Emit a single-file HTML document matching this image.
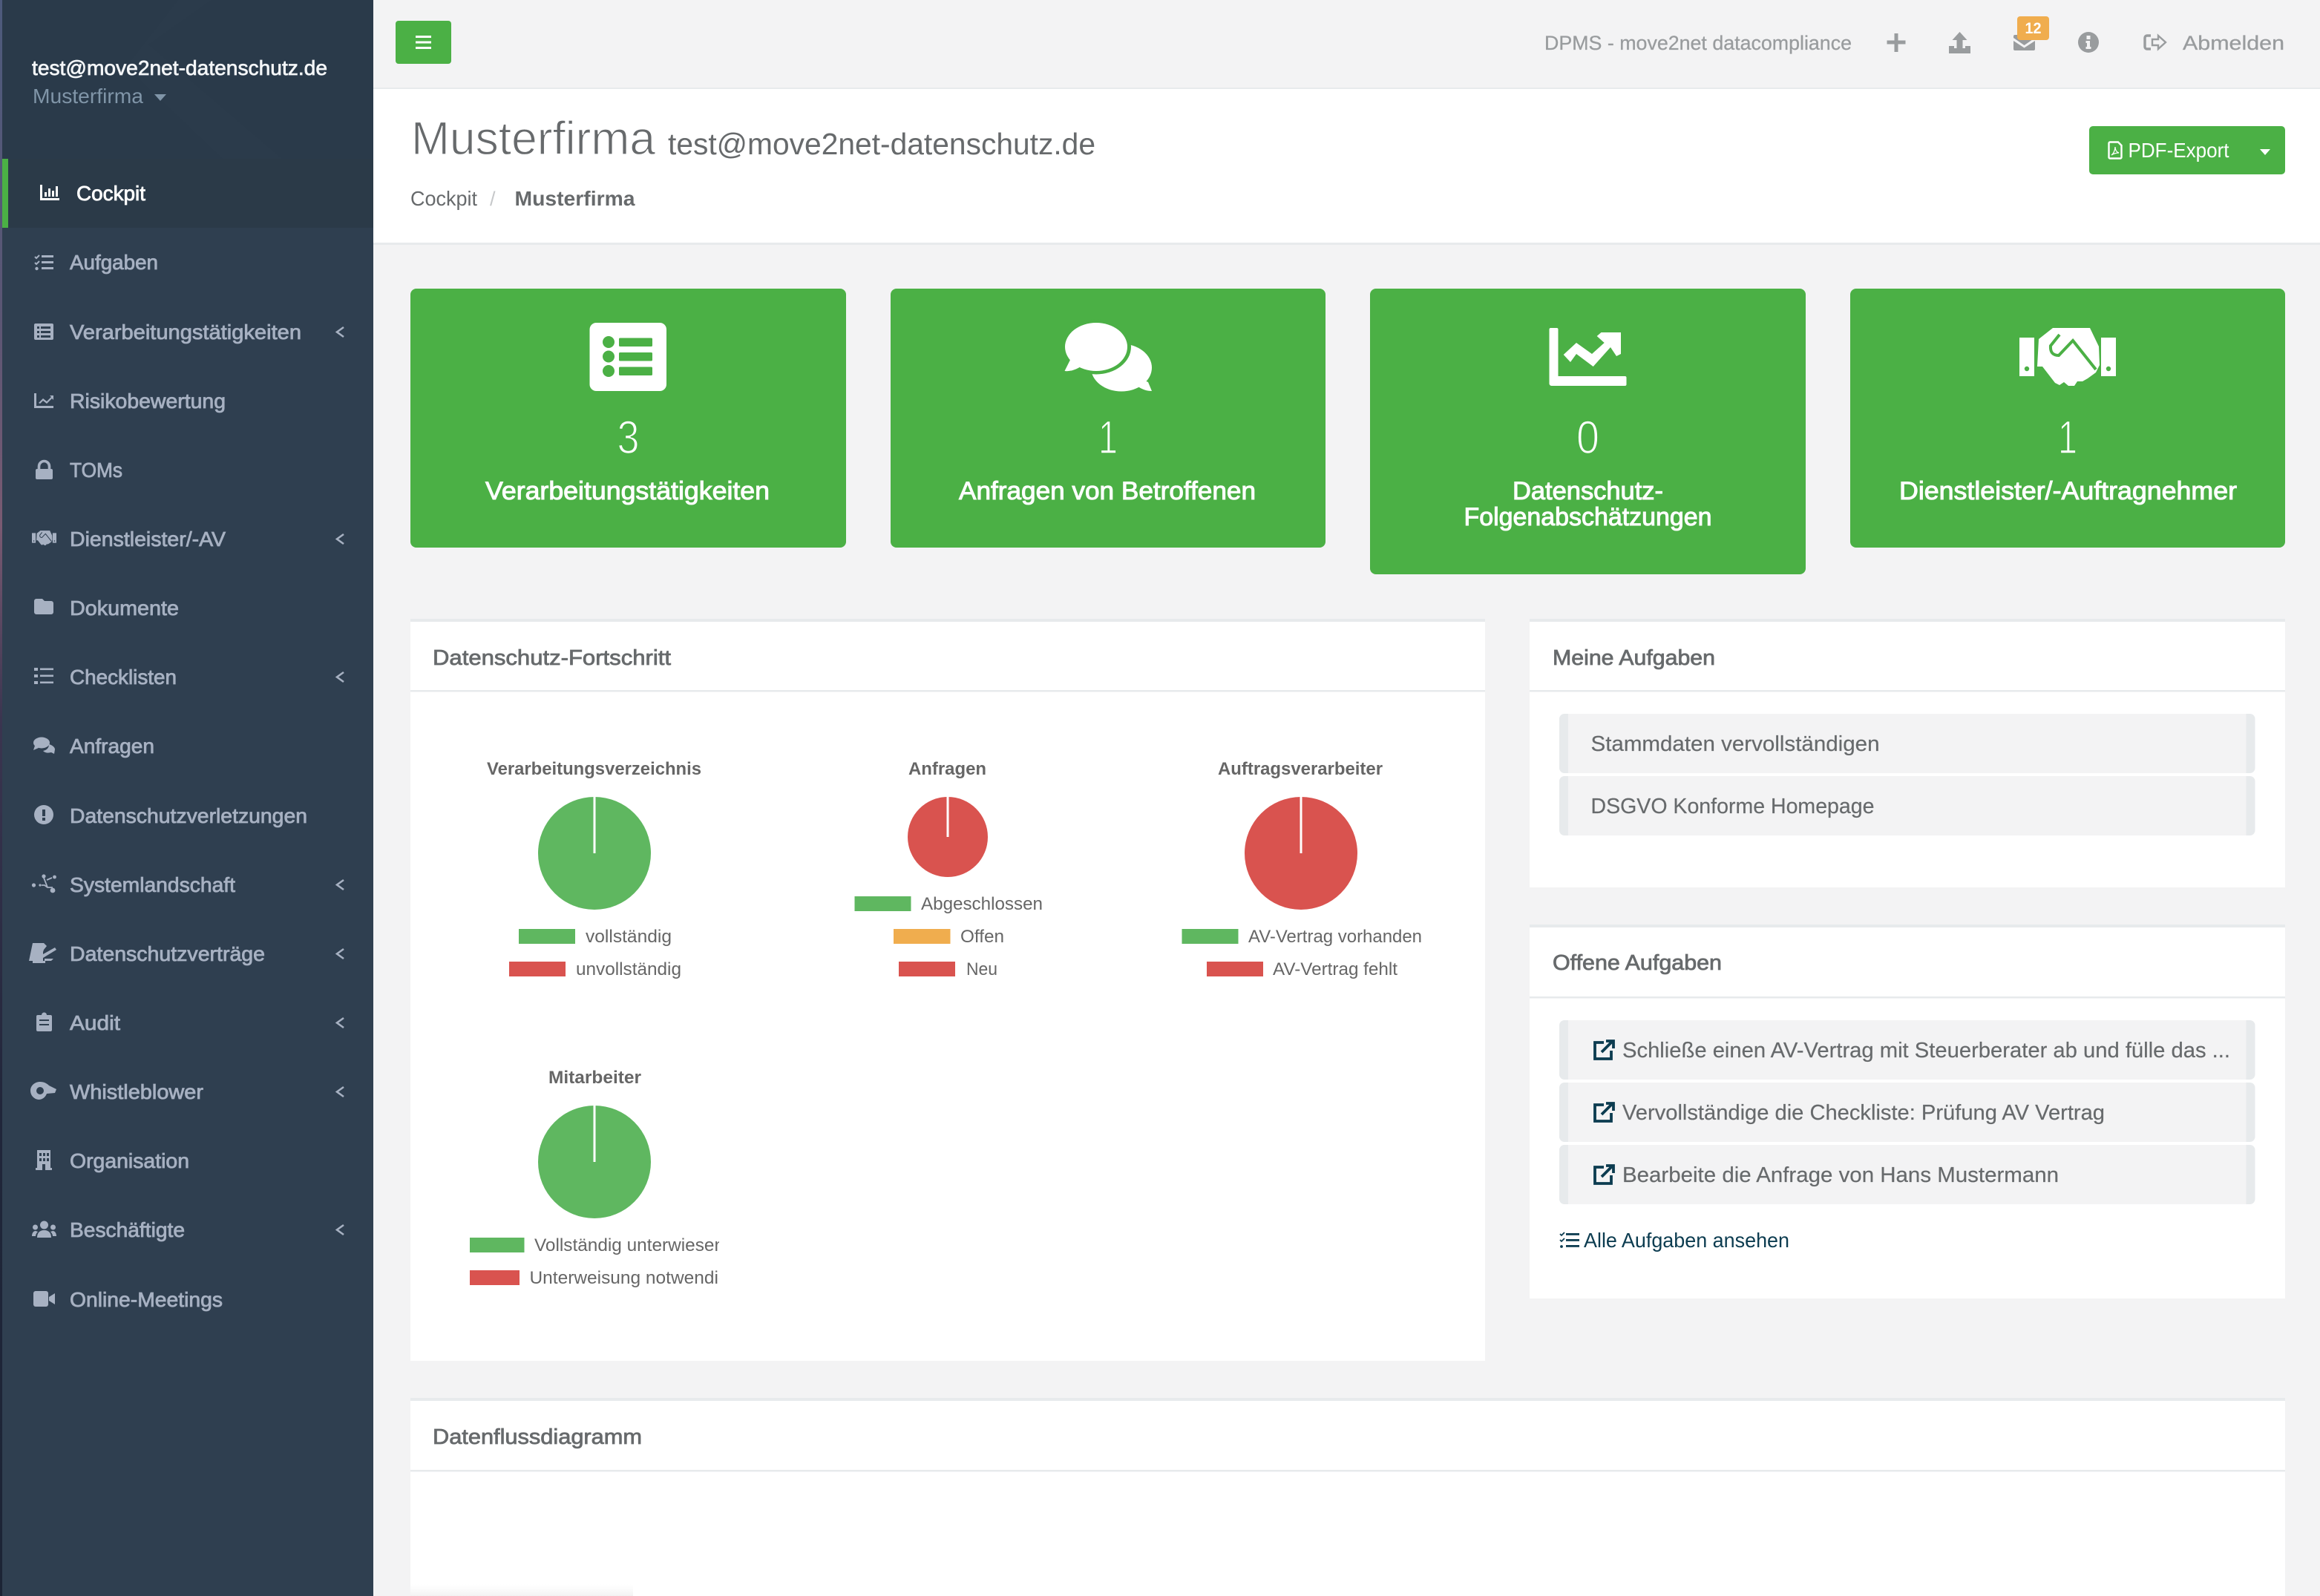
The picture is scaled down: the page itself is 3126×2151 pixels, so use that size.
<!DOCTYPE html>
<html lang="de"><head><meta charset="utf-8"><title>Cockpit</title>
<style>
html,body{margin:0;padding:0;background:#f3f3f4;width:3126px;height:2151px;overflow:hidden}
svg{display:block}
text{font-family:"Liberation Sans",sans-serif}
.m{font-size:28px;fill:#a7b1c2;stroke:#a7b1c2;stroke-width:.8px}
.h{font-size:29px;fill:#676a6c;stroke:#676a6c;stroke-width:.8px}
.t{font-size:29px;fill:#676a6c;stroke:#676a6c;stroke-width:.2px}
.nav{font-size:27px;fill:#999c9e;stroke:#999c9e;stroke-width:.3px}
.c{font-size:34px;fill:#fff;stroke:#fff;stroke-width:1px;text-anchor:middle}
.n{font-size:63px;fill:#fff;stroke:#4bb045;stroke-width:1.6px;text-anchor:middle}
.ct{font-size:24px;font-weight:bold;fill:#666}
.l{font-size:24px;fill:#666}
.ib{fill:#a7b1c2}
.chev{fill:none;stroke:#a7b1c2;stroke-width:2.6}
</style></head><body>
<svg xmlns="http://www.w3.org/2000/svg" width="3126" height="2151" viewBox="0 0 3126 2151">
<defs>
<linearGradient id="edge" x1="0" y1="0" x2="0" y2="1">
<stop offset="0" stop-color="#4d5a7c"/><stop offset=".2" stop-color="#5b5674"/><stop offset=".33" stop-color="#7a5a72"/><stop offset=".45" stop-color="#3b3550"/><stop offset=".7" stop-color="#20263a"/><stop offset="1" stop-color="#1c2435"/>
</linearGradient>
<linearGradient id="fade" x1="0" y1="0" x2="0" y2="1"><stop offset="0" stop-color="#f8f8f8" stop-opacity="0"/><stop offset="1" stop-color="#f2f2f2"/></linearGradient>
<clipPath id="cl"><rect x="560" y="1650" width="409" height="100"/></clipPath>
<symbol id="hs" viewBox="0 0 130 78" overflow="visible">
<path fill="currentColor" d="M0 13H20V65H0zM110 13H130V65H110z"/>
<circle cx="10" cy="55" r="3.2" fill="var(--c)"/><circle cx="120" cy="55" r="3.2" fill="var(--c)"/>
<path fill="currentColor" d="M45 0H95L107 25 108 50 103 60 92 68 85 72 78 72 74 78H66L60 73 54 77 48 74 31 52 24 52 26 15Z"/>
<path fill="none" stroke="var(--c)" stroke-width="4" d="M54 9 42 24Q41 37 53 37L72 17 103 56"/>
</symbol>
<g id="ext" fill="none" stroke="#0c3c50" stroke-width="3.8"><path d="M14 4H2V26H24V15"/><path d="M11 17 26 2M17 2H27V12"/></g>
</defs>

<rect width="3126" height="2151" fill="#f3f3f4"/>
<rect x="0" y="0" width="4" height="2151" fill="url(#edge)"/>

<!-- Sidebar -->
<rect x="3" y="0" width="500" height="2151" fill="#2f3f50"/>
<rect x="3" y="0" width="500" height="214" fill="#2a3a4a"/>
<path d="M240 0 285 0 200 60 380 214 300 214 170 90Z" fill="#2b3b4b" />
<rect x="3" y="214" width="500" height="93" fill="#2b3a48"/>
<rect x="3" y="214" width="8" height="93" fill="#4bb045"/>
<text x="43" y="101" font-size="28" fill="#f4f6f8" stroke="#f4f6f8" stroke-width=".7" textLength="398" lengthAdjust="spacingAndGlyphs">test@move2net-datenschutz.de</text>
<text x="44" y="139" font-size="28" fill="#8095a8" textLength="149" lengthAdjust="spacingAndGlyphs">Musterfirma</text>
<path d="M208 127H224L216 136Z" fill="#8095a8"/>

<text x="103" y="270" font-size="28" fill="#fff" stroke="#fff" stroke-width=".8" textLength="93" lengthAdjust="spacingAndGlyphs">Cockpit</text>
<text class="m" x="94" y="363" textLength="119" lengthAdjust="spacingAndGlyphs">Aufgaben</text>
<text class="m" x="94" y="457" textLength="312" lengthAdjust="spacingAndGlyphs">Verarbeitungstätigkeiten</text>
<text class="m" x="94" y="550" textLength="210" lengthAdjust="spacingAndGlyphs">Risikobewertung</text>
<text class="m" x="94" y="643" textLength="71" lengthAdjust="spacingAndGlyphs">TOMs</text>
<text class="m" x="94" y="736" textLength="210" lengthAdjust="spacingAndGlyphs">Dienstleister/-AV</text>
<text class="m" x="94" y="829" textLength="147" lengthAdjust="spacingAndGlyphs">Dokumente</text>
<text class="m" x="94" y="922" textLength="144" lengthAdjust="spacingAndGlyphs">Checklisten</text>
<text class="m" x="94" y="1015" textLength="114" lengthAdjust="spacingAndGlyphs">Anfragen</text>
<text class="m" x="94" y="1109" textLength="320" lengthAdjust="spacingAndGlyphs">Datenschutzverletzungen</text>
<text class="m" x="94" y="1202" textLength="223" lengthAdjust="spacingAndGlyphs">Systemlandschaft</text>
<text class="m" x="94" y="1295" textLength="263" lengthAdjust="spacingAndGlyphs">Datenschutzverträge</text>
<text class="m" x="94" y="1388" textLength="68" lengthAdjust="spacingAndGlyphs">Audit</text>
<text class="m" x="94" y="1481" textLength="180" lengthAdjust="spacingAndGlyphs">Whistleblower</text>
<text class="m" x="94" y="1574" textLength="161" lengthAdjust="spacingAndGlyphs">Organisation</text>
<text class="m" x="94" y="1667" textLength="155" lengthAdjust="spacingAndGlyphs">Beschäftigte</text>
<text class="m" x="94" y="1761" textLength="206" lengthAdjust="spacingAndGlyphs">Online-Meetings</text>

<!-- Chevrons -->
<g class="chev">
<path d="M463 441 454 447.5 463 454"/><path d="M463 720 454 726.5 463 733"/><path d="M463 906 454 912.500 463 919"/><path d="M463 1186 454 1192.500 463 1199"/><path d="M463 1279 454 1285.500 463 1292"/><path d="M463 1372 454 1378.500 463 1385"/><path d="M463 1465 454 1471.500 463 1478"/><path d="M463 1651 454 1657.500 463 1664"/>
</g>

<!-- Sidebar icons -->
<g fill="#fff"><path d="M54 249h3v18h23v3H54z"/><rect x="60" y="259" width="3" height="6"/><rect x="65" y="254" width="3" height="11"/><rect x="70" y="257" width="3" height="8"/><rect x="75" y="251" width="3" height="14"/></g>
<g class="ib">
<path d="M47 346l2 2 4-4M47 354l2 2 4-4" fill="none" stroke="#a7b1c2" stroke-width="2"/><circle cx="49.5" cy="362" r="2.2"/><rect x="56" y="344" width="16" height="3"/><rect x="56" y="352" width="16" height="3"/><rect x="56" y="360" width="16" height="3"/>
<path fill-rule="evenodd" d="M48 436h22a2 2 0 0 1 2 2v18a2 2 0 0 1-2 2H48a2 2 0 0 1-2-2v-18a2 2 0 0 1 2-2zM50 440v3h3v-3zM50 446v3h3v-3zM50 452v3h3v-3zM55 440v3h13v-3zM55 446v3h13v-3zM55 452v3h13v-3z"/>
<path d="M46 530h3v17h23v3H46z"/><path d="M52 543l6-6 5 4 6-6-2-2h5v6l-2-2-7 7-5-4-4 4z"/>
<rect x="48" y="632" width="23" height="14" rx="2"/><path d="M52.5 633v-4.5a7 7 0 0 1 14 0v4.5" fill="none" stroke="#a7b1c2" stroke-width="3.6"/>
<use href="#hs" x="43" y="715" width="33" height="20" style="color:#a7b1c2;--c:#2f3f50"/>
<path d="M46 810a3 3 0 0 1 3-3h8l3 3h9a3 3 0 0 1 3 3v12a3 3 0 0 1-3 3H49a3 3 0 0 1-3-3z"/>
<rect x="46" y="900" width="5" height="4"/><rect x="46" y="909" width="5" height="4"/><rect x="46" y="918" width="5" height="4"/><rect x="54" y="900.5" width="18" height="2.6"/><rect x="54" y="909.5" width="18" height="2.6"/><rect x="54" y="918.5" width="18" height="2.6"/>
<ellipse cx="56" cy="1001" rx="11" ry="7.5"/><path d="M47 1005 45 1011 52 1008Z"/><path d="M66 1003c4 1 8 4 8 7l-1 6-4-2c-4 1-8 1-11-2 5-1 8-4 8-9z"/>
<path fill-rule="evenodd" d="M59 1085a13 13 0 1 1 0 26 13 13 0 0 1 0-26zM57 1091v9h4v-9zM57 1102v4h4v-4z"/>
<circle cx="45.5" cy="1193" r="2.6"/><circle cx="54" cy="1193" r="1.6"/><circle cx="59" cy="1181" r="2.6"/><circle cx="73.5" cy="1182" r="2.4"/><circle cx="71" cy="1200" r="3.4"/>
<path d="M59 1183l5 13h7M64 1196l-4-3h-4M70 1183l-7 3" fill="none" stroke="#a7b1c2" stroke-width="1.8"/>
<path d="M44 1271h15l4 4-4 5-3 9-12 8v1h17v-3l-4 0h-18z"/><path d="M44 1271h14v26H44z"/><path d="M58 1291l18-11-2-3-16 9z"/><path d="M60 1292h12l-3 3H60z"/>
<path fill-rule="evenodd" d="M51 1368h5a3.500 3.500 0 0 1 7 0h5a2 2 0 0 1 2 2v18a2 2 0 0 1-2 2H51a2 2 0 0 1-2-2v-18a2 2 0 0 1 2-2zM53 1374v2h13v-2zM53 1380v2h13v-2z"/>
<path fill-rule="evenodd" d="M54 1458c5 0 9 2 12 5l10 5-2 5-11 1c-2 5-6 8-11 8a12 12 0 0 1-11-12c0-7 6-12 13-12zM54 1465a5 5 0 1 0 0 10 5 5 0 0 0 0-10z"/>
<path fill-rule="evenodd" d="M50 1550h18v24h2v3H48v-3h2zM53 1554v4h3v-4zM58 1554v4h3v-4zM63 1554v4h3v-4zM53 1561v4h3v-4zM58 1561v4h3v-4zM63 1561v4h3v-4zM57 1569v8h4v-8z"/>
<circle cx="59.500" cy="1651" r="5.500"/><path d="M50 1668c0-6 3-10 9.500-10s9.500 4 9.500 10z"/><circle cx="47.500" cy="1654" r="3.500"/><circle cx="71.500" cy="1654" r="3.500"/><path d="M43 1666c0-4 2-7 5-7l3 1c-2 2-3 4-3 6zM76 1666c0-4-2-7-5-7l-3 1c2 2 3 4 3 6z"/>
<rect x="45" y="1740" width="20" height="21" rx="3"/><path d="M66 1748l8-5v15l-8-5z"/>
</g>

<!-- Top navigation -->
<rect x="533" y="28" width="75" height="58" rx="4" fill="#4bb045"/>
<g fill="#fff"><rect x="560" y="48" width="21" height="3" /><rect x="560" y="55.500" width="21" height="3"/><rect x="560" y="63" width="21" height="3"/></g>
<rect x="503" y="118" width="2623" height="2" fill="#e7eaec"/>
<text class="nav" x="2081" y="67" font-size="26" textLength="414" lengthAdjust="spacingAndGlyphs">DPMS - move2net datacompliance</text>
<g fill="#999c9e">
<path d="M2552.500 45h5v9.500h10v5h-10V70h-5v-10.500h-10v-5h10z"/>
<path d="M2640.500 43l10 11h-6v12h-8V54h-6z"/><path d="M2626 62h7v3h15v-3h7v10h-29z"/>
<path d="M2713 49a2 2 0 0 1 2-2h25a2 2 0 0 1 2 2v2l-14.500 10L2713 51zM2713 55l14.500 9.500L2742 55v11a2 2 0 0 1-2 2h-25a2 2 0 0 1-2-2z"/>
<path fill-rule="evenodd" d="M2814 43a14 14 0 1 1 0 28 14 14 0 0 1 0-28zM2811.500 48v5h5v-5zM2810.500 55v3h1.500v5h-1.500v3h7v-3H2816v-8z"/>
</g>
<g fill="none" stroke="#999c9e" stroke-width="3.400"><path d="M2898 48h-5a3 3 0 0 0-3 3v12a3 3 0 0 0 3 3h5"/></g>
<path d="M2908 48l10 9-10 9v-5h-8v-8h8z" fill="none" stroke="#999c9e" stroke-width="2.400"/>
<rect x="2718" y="22" width="43" height="32" rx="4" fill="#f0ad4e"/>
<text x="2739.500" y="45" font-size="21" font-weight="bold" fill="#fff" text-anchor="middle" textLength="22" lengthAdjust="spacingAndGlyphs">12</text>
<text class="nav" x="2941" y="67" font-size="29" textLength="137" lengthAdjust="spacingAndGlyphs">Abmelden</text>

<!-- Page heading -->
<rect x="503" y="120" width="2623" height="207" fill="#fff"/>
<rect x="503" y="327" width="2623" height="3" fill="#e7eaec"/>
<text x="554" y="208" font-size="63" fill="#676a6c" stroke="#fff" stroke-width="1.2" textLength="329" lengthAdjust="spacingAndGlyphs">Musterfirma</text>
<text x="900" y="208" font-size="41" fill="#676a6c" textLength="576" lengthAdjust="spacingAndGlyphs">test@move2net-datenschutz.de</text>
<text x="553" y="277" font-size="28" fill="#676a6c" textLength="90" lengthAdjust="spacingAndGlyphs">Cockpit</text>
<text x="660" y="277" font-size="27" fill="#c6c8ca">/</text>
<text x="693.500" y="277" font-size="28" font-weight="bold" fill="#676a6c" textLength="162" lengthAdjust="spacingAndGlyphs">Musterfirma</text>

<rect x="2815" y="170" width="264" height="65" rx="5" fill="#4bb045"/>
<path d="M2843 191.500h11l4.500 4.500v16a1.500 1.500 0 0 1-1.500 1.500h-14a1.500 1.500 0 0 1-1.500-1.500v-19a1.500 1.500 0 0 1 1.500-1.500z" fill="none" stroke="#fff" stroke-width="2.400"/>
<path d="M2845 209c3-2 5-7 5-11 0 4 2 7 5 8-4 0-7 1-10 3z" fill="none" stroke="#fff" stroke-width="1.300"/>
<text x="2867.500" y="212" font-size="28" fill="#fff" textLength="136" lengthAdjust="spacingAndGlyphs">PDF-Export</text>
<path d="M3045 201h14l-7 8z" fill="#fff"/>

<!-- Stat cards -->
<rect x="553" y="389" width="587" height="349" rx="8" fill="#4bb045"/>
<rect x="1200" y="389" width="586" height="349" rx="8" fill="#4bb045"/>
<rect x="1846" y="389" width="587" height="385" rx="8" fill="#4bb045"/>
<rect x="2493" y="389" width="586" height="349" rx="8" fill="#4bb045"/>

<rect x="794.500" y="435" width="103.500" height="92" rx="9" fill="#fff"/>
<g fill="#4bb045"><circle cx="820" cy="461" r="8"/><circle cx="820" cy="480.500" r="8"/><circle cx="820" cy="500" r="8"/><rect x="834" y="455.500" width="45" height="11.500" rx="1.500"/><rect x="834" y="475" width="45" height="11.500" rx="1.500"/><rect x="834" y="494.500" width="45" height="11.500" rx="1.500"/></g>

<ellipse cx="1511" cy="495.500" rx="41" ry="32" fill="#fff"/>
<path fill="#fff" d="M1540 512 1547 515 1552 527C1545 527 1539 525 1532 520Z"/>
<ellipse cx="1477" cy="467.500" rx="47" ry="37" fill="#4bb045"/>
<ellipse cx="1477" cy="467.500" rx="42" ry="32.500" fill="#fff"/>
<path fill="#fff" d="M1442 485 1434.500 500C1442 501 1450 498 1458 493Z"/>

<path fill="#fff" d="M2087.500 444a2 2 0 0 1 2-2h8a2 2 0 0 1 2 2v63h90a2 2 0 0 1 2 2v9a2 2 0 0 1-2 2h-99a3 3 0 0 1-3-3z"/>
<path fill="#fff" d="M2106.700 478 2124 462 2145 477 2161.700 462 2151.700 453 2157.500 448H2184V477L2178 480 2170 468 2146.700 494 2124 477 2116 488Z"/>

<use href="#hs" x="2721" y="442" width="130" height="78" style="color:#fff;--c:#4bb045"/>

<text class="n" x="846.500" y="611" textLength="30" lengthAdjust="spacingAndGlyphs">3</text>
<text class="n" x="1493" y="611" textLength="26" lengthAdjust="spacingAndGlyphs">1</text>
<text class="n" x="2139.500" y="611" textLength="31" lengthAdjust="spacingAndGlyphs">0</text>
<text class="n" x="2786" y="611" textLength="26" lengthAdjust="spacingAndGlyphs">1</text>
<text class="c" x="845.500" y="673" textLength="383" lengthAdjust="spacingAndGlyphs">Verarbeitungstätigkeiten</text>
<text class="c" x="1492" y="673" textLength="400" lengthAdjust="spacingAndGlyphs">Anfragen von Betroffenen</text>
<text class="c" x="2139.500" y="673" textLength="203" lengthAdjust="spacingAndGlyphs">Datenschutz-</text>
<text class="c" x="2139.500" y="708" textLength="334" lengthAdjust="spacingAndGlyphs">Folgenabschätzungen</text>
<text class="c" x="2786.500" y="673" textLength="455" lengthAdjust="spacingAndGlyphs">Dienstleister/-Auftragnehmer</text>

<!-- Panel: Fortschritt -->
<rect x="553" y="834" width="1448" height="1000" fill="#fff"/>
<rect x="553" y="834" width="1448" height="4" fill="#e7eaec"/>
<rect x="553" y="930" width="1448" height="2.500" fill="#e7eaec"/>
<text class="h" x="583" y="896" textLength="321" lengthAdjust="spacingAndGlyphs">Datenschutz-Fortschritt</text>

<text class="ct" x="656" y="1044" textLength="289" lengthAdjust="spacingAndGlyphs">Verarbeitungsverzeichnis</text>
<circle cx="801" cy="1150" r="76" fill="#5fb760"/><rect x="799.500" y="1074" width="3" height="76" fill="#fff"/>
<rect x="699" y="1252" width="76" height="20" fill="#5fb760"/>
<text class="l" x="789" y="1270" textLength="116" lengthAdjust="spacingAndGlyphs">vollständig</text>
<rect x="686" y="1296" width="76" height="20" fill="#d9534f"/>
<text class="l" x="776" y="1314" textLength="142" lengthAdjust="spacingAndGlyphs">unvollständig</text>

<text class="ct" x="1224" y="1044" textLength="105" lengthAdjust="spacingAndGlyphs">Anfragen</text>
<circle cx="1277" cy="1128" r="54" fill="#d9534f"/><rect x="1275.500" y="1074" width="3" height="54" fill="#fff"/>
<rect x="1151.500" y="1208" width="76" height="20" fill="#5fb760"/>
<text class="l" x="1241" y="1226" textLength="164" lengthAdjust="spacingAndGlyphs">Abgeschlossen</text>
<rect x="1204" y="1252" width="76.500" height="20" fill="#f0ad4e"/>
<text class="l" x="1294" y="1270" textLength="59" lengthAdjust="spacingAndGlyphs">Offen</text>
<rect x="1211" y="1296" width="76" height="20" fill="#d9534f"/>
<text class="l" x="1302" y="1314" textLength="42" lengthAdjust="spacingAndGlyphs">Neu</text>

<text class="ct" x="1641" y="1044" textLength="222" lengthAdjust="spacingAndGlyphs">Auftragsverarbeiter</text>
<circle cx="1753" cy="1150" r="76" fill="#d9534f"/><rect x="1751.500" y="1074" width="3" height="76" fill="#fff"/>
<rect x="1592.500" y="1252" width="76" height="20" fill="#5fb760"/>
<text class="l" x="1682" y="1270" textLength="234" lengthAdjust="spacingAndGlyphs">AV-Vertrag vorhanden</text>
<rect x="1626" y="1296" width="76" height="20" fill="#d9534f"/>
<text class="l" x="1715" y="1314" textLength="168" lengthAdjust="spacingAndGlyphs">AV-Vertrag fehlt</text>

<text class="ct" x="739" y="1460" textLength="125" lengthAdjust="spacingAndGlyphs">Mitarbeiter</text>
<circle cx="801" cy="1566" r="76" fill="#5fb760"/><rect x="799.500" y="1490" width="3" height="76" fill="#fff"/>
<rect x="633" y="1668" width="73.500" height="20" fill="#5fb760"/>
<rect x="633" y="1712" width="67" height="20" fill="#d9534f"/>
<g clip-path="url(#cl)">
<text class="l" x="720" y="1686" textLength="256" lengthAdjust="spacingAndGlyphs">Vollständig unterwiesen</text>
<text class="l" x="713.500" y="1730" textLength="268" lengthAdjust="spacingAndGlyphs">Unterweisung notwendig</text>
</g>

<!-- Panel: Datenfluss -->
<rect x="553" y="1884" width="2526" height="267" fill="#fff"/>
<rect x="553" y="1884" width="2526" height="4" fill="#e7eaec"/>
<rect x="553" y="1981" width="2526" height="2.500" fill="#e7eaec"/>
<text class="h" x="583" y="1946" textLength="282" lengthAdjust="spacingAndGlyphs">Datenflussdiagramm</text>
<rect x="553" y="2135" width="300" height="16" fill="url(#fade)"/>

<!-- Panel: Meine Aufgaben -->
<rect x="2061" y="834" width="1018" height="362" fill="#fff"/>
<rect x="2061" y="834" width="1018" height="4" fill="#e7eaec"/>
<rect x="2061" y="930" width="1018" height="2.500" fill="#e7eaec"/>
<text class="h" x="2092" y="896" textLength="219" lengthAdjust="spacingAndGlyphs">Meine Aufgaben</text>
<g>
<rect x="2101" y="962" width="937.500" height="80" rx="7" fill="#e7eaec"/><rect x="2113" y="962" width="913.500" height="80" fill="#f3f3f4"/>
<rect x="2101" y="1046" width="937.500" height="80" rx="7" fill="#e7eaec"/><rect x="2113" y="1046" width="913.500" height="80" fill="#f3f3f4"/>
</g>
<text class="t" x="2143.500" y="1012" textLength="389" lengthAdjust="spacingAndGlyphs">Stammdaten vervollständigen</text>
<text class="t" x="2143.500" y="1096" textLength="382" lengthAdjust="spacingAndGlyphs">DSGVO Konforme Homepage</text>

<!-- Panel: Offene Aufgaben -->
<rect x="2061" y="1246" width="1018" height="504" fill="#fff"/>
<rect x="2061" y="1246" width="1018" height="4" fill="#e7eaec"/>
<rect x="2061" y="1343" width="1018" height="2.500" fill="#e7eaec"/>
<text class="h" x="2092" y="1307" textLength="228" lengthAdjust="spacingAndGlyphs">Offene Aufgaben</text>
<rect x="2101" y="1375" width="937.500" height="80" rx="7" fill="#e7eaec"/><rect x="2113" y="1375" width="913.500" height="80" fill="#f3f3f4"/>
<rect x="2101" y="1459" width="937.500" height="80" rx="7" fill="#e7eaec"/><rect x="2113" y="1459" width="913.500" height="80" fill="#f3f3f4"/>
<rect x="2101" y="1543" width="937.500" height="80" rx="7" fill="#e7eaec"/><rect x="2113" y="1543" width="913.500" height="80" fill="#f3f3f4"/>
<use href="#ext" x="2147" y="1401"/><use href="#ext" x="2147" y="1485"/><use href="#ext" x="2147" y="1569"/>
<text class="t" x="2186" y="1425" textLength="819" lengthAdjust="spacingAndGlyphs">Schließe einen AV-Vertrag mit Steuerberater ab und fülle das ...</text>
<text class="t" x="2186" y="1509" textLength="650" lengthAdjust="spacingAndGlyphs">Vervollständige die Checkliste: Prüfung AV Vertrag</text>
<text class="t" x="2186" y="1593" textLength="588" lengthAdjust="spacingAndGlyphs">Bearbeite die Anfrage von Hans Mustermann</text>
<g fill="#0c3c50"><path d="M2102 1663l2 2 4-4M2102 1671l2 2 4-4" fill="none" stroke="#0c3c50" stroke-width="1.800"/><circle cx="2104" cy="1680" r="1.900"/><rect x="2110" y="1662" width="18" height="2.800"/><rect x="2110" y="1670" width="18" height="2.800"/><rect x="2110" y="1678" width="18" height="2.800"/></g>
<text x="2134" y="1681" font-size="28" fill="#0c3c50" textLength="277" lengthAdjust="spacingAndGlyphs">Alle Aufgaben ansehen</text>
</svg>
</body></html>
